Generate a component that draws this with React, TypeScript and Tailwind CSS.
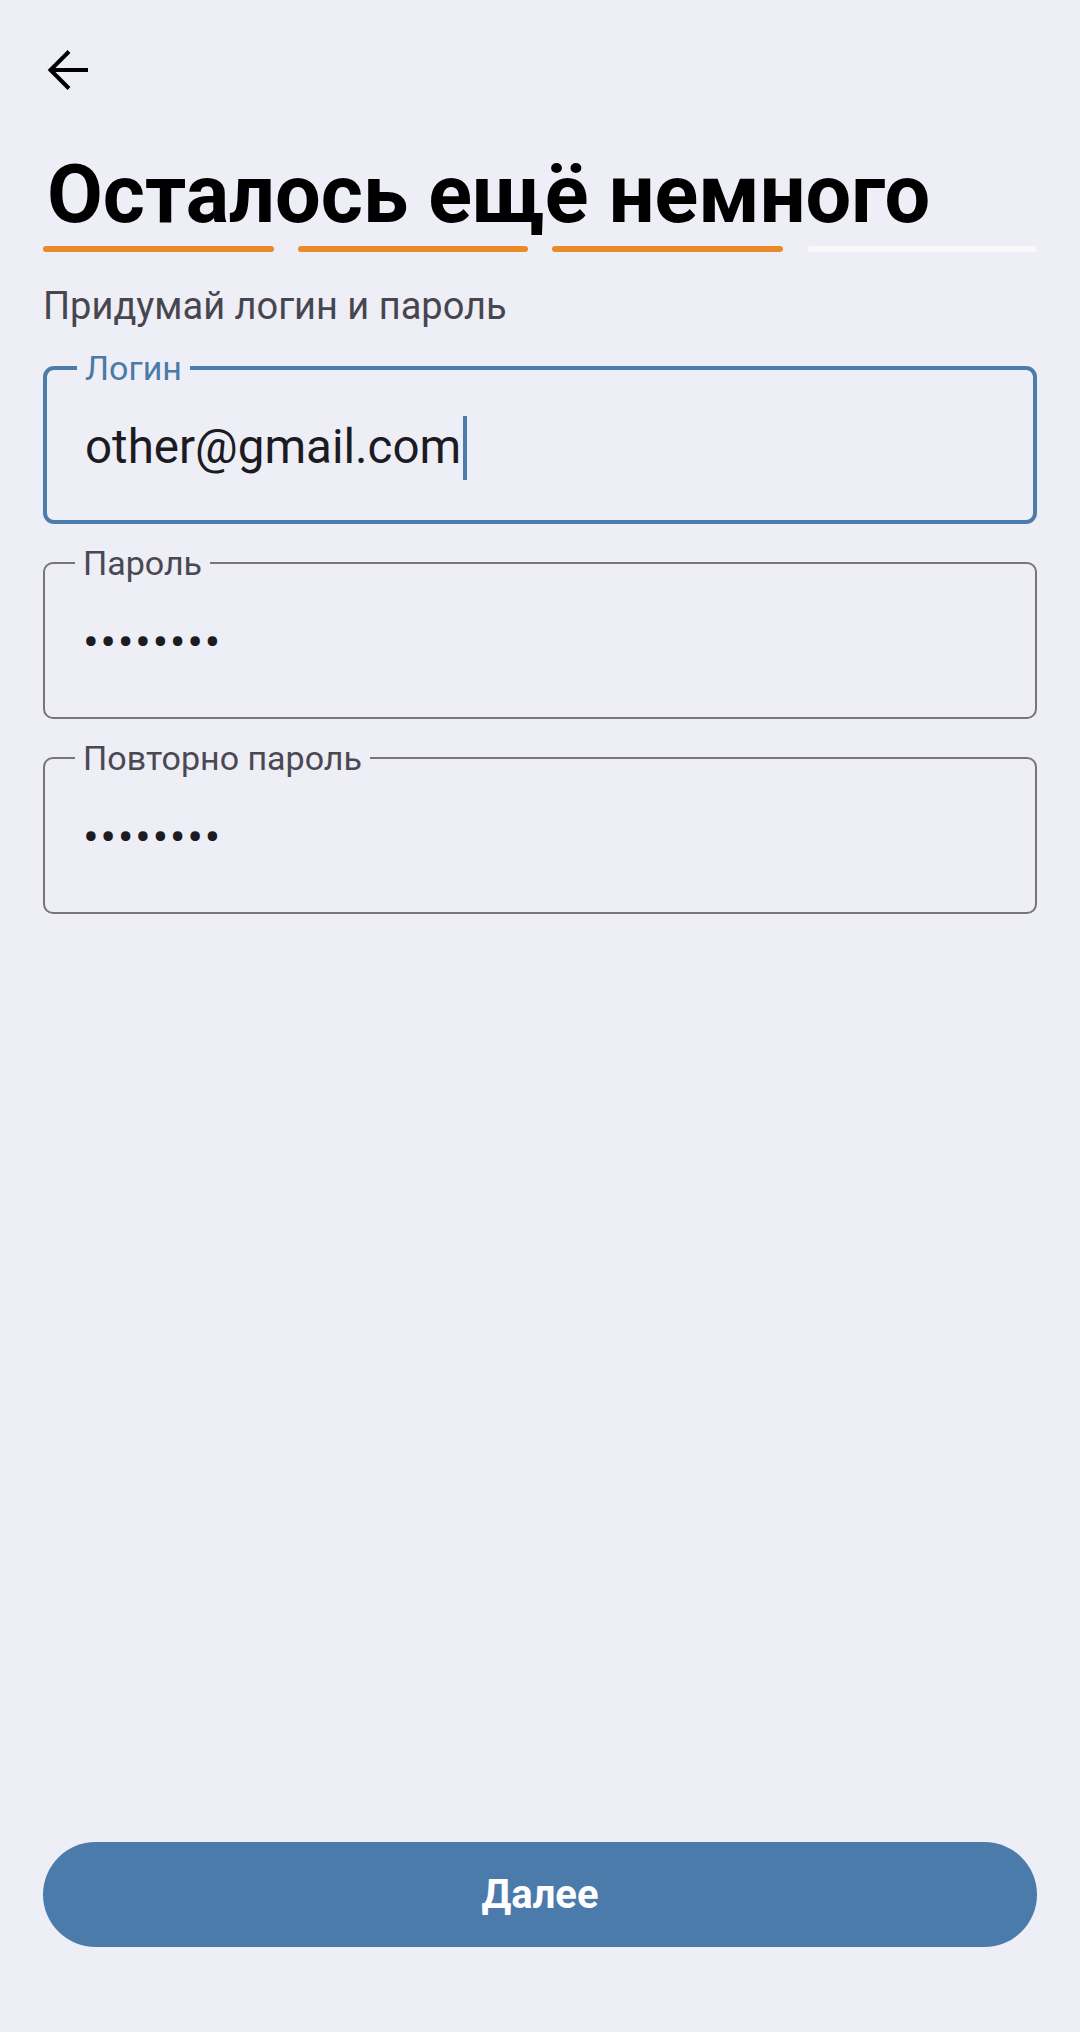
import { useState } from 'react';

const font = { fontFamily: 'Roboto, "Noto Sans", sans-serif' };

function BackArrow() {
  return (
    <svg width="42" height="42" viewBox="0 0 42 42" fill="none" stroke="#000" strokeWidth="4">
      <path d="M3 21H41" />
      <path d="M22 2.5L3.5 21L22 39.5" />
    </svg>
  );
}

function Field({
  label,
  value,
  focused,
  secret,
}: {
  label: string;
  value: string;
  focused?: boolean;
  secret?: boolean;
}) {
  return (
    <fieldset
      className={
        focused
          ? 'border-[4px] border-[#4c7caa] rounded-[11px] px-[38px] h-[173px]'
          : 'border-2 border-[#77747e] rounded-[10px] px-[38px] h-[173px]'
      }
    >
      <legend className={'px-[8px] -ml-[8px] text-[34px] leading-none ' + (focused ? 'text-[#4a7aa9]' : 'text-[#4a4851]')}>
        {label}
      </legend>
      {secret ? (
        <div className="pt-[38px] text-[47px] leading-none text-[#1c1b21] tracking-[1.5px]">{'•'.repeat(value.length)}</div>
      ) : (
        <div className="pt-[31px] flex items-center text-[47.5px] leading-none text-[#1c1b21]">
          <span>{value}</span>
          <span className="w-[4px] h-[64px] bg-[#4c7caa] ml-[2px]" />
        </div>
      )}
    </fieldset>
  );
}

export default function App() {
  const [login] = useState('other@gmail.com');
  const [password] = useState('12345678');

  return (
    <div className="h-[2032px] bg-[#edeef6] flex flex-col px-[43px]" style={font}>
      <div className="pt-[49px] pl-[4px]">
        <BackArrow />
      </div>

      <h1 className="mt-[63px] pl-[4px] text-[81px] leading-none font-bold text-black">Осталось ещё немного</h1>

      <div className="mt-[11px] flex gap-[24px]">
        <div className="flex-1 h-[6px] rounded-full bg-[#e98a2b]" />
        <div className="flex-1 h-[6px] rounded-full bg-[#e98a2b]" />
        <div className="flex-1 h-[6px] rounded-full bg-[#e98a2b]" />
        <div className="flex-1 h-[6px] rounded-full bg-[#f8f8fb]" />
      </div>

      <p className="mt-[35px] text-[38px] leading-none text-[#47464f]">Придумай логин и пароль</p>

      <div className="mt-[26px] flex flex-col gap-[22px]">
        <Field label="Логин" value={login} focused />
        <Field label="Пароль" value={password} secret />
        <Field label="Повторно пароль" value={password} secret />
      </div>

      <div className="flex-1" />

      <button className="mb-[85px] h-[105px] w-full rounded-full bg-[#4a7bab] text-white text-[40px] font-bold">
        Далее
      </button>
    </div>
  );
}
